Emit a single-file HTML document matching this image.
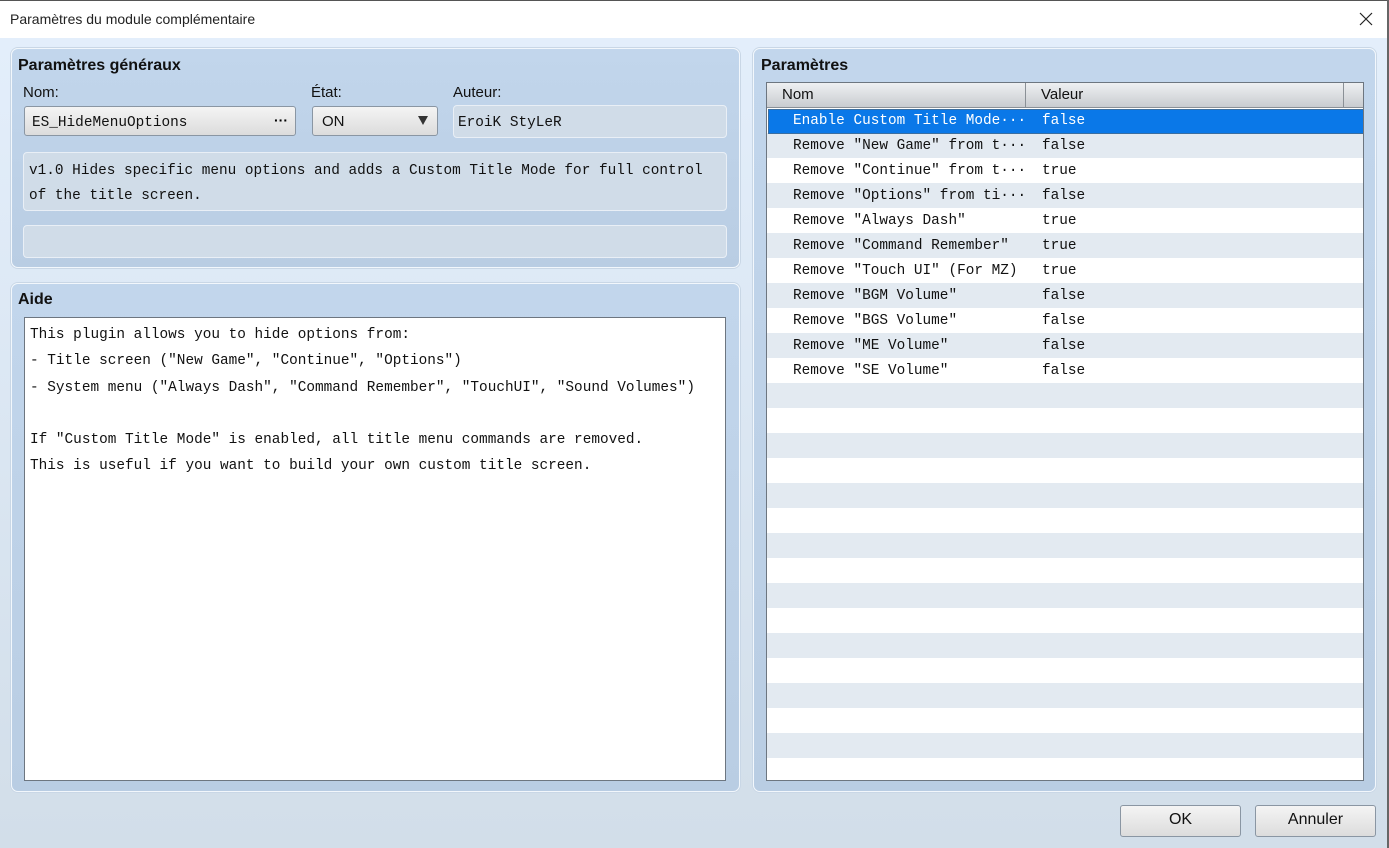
<!DOCTYPE html>
<html><head><meta charset="utf-8"><style>
*{box-sizing:border-box;margin:0;padding:0}
body{width:1389px;height:848px;overflow:hidden;position:relative;font-family:"Liberation Sans",sans-serif;background:linear-gradient(#e4effc,#d2dee9);}
.abs{position:absolute}
.title{left:0;top:0;width:1389px;height:38px;background:#fff;border-top:1px solid #555;}
.title span{position:absolute;left:10px;top:10px;font-size:14px;color:#222}
.rb{right:0;top:0;width:2px;height:848px;background:#666}
.panel{border:1px solid #f2f7fc;border-radius:7px;background:linear-gradient(#c2d6ec,#b9cde3);box-shadow:0 0 0 1px #c9d7e6}
.h{font-weight:bold;font-size:16px;color:#111}
.lbl{font-size:15px;color:#111}
.mono{font-family:"Liberation Mono",monospace;font-size:14.4px;color:#111}
.btn{border:1px solid #8a96a3;border-radius:3px;background:linear-gradient(#f4f4f4,#dcdcdc);}
.box{border:1px solid #e9eff6;border-radius:4px;background:#d0dce8}
.ta{background:#fff;border:1px solid #6d7680}
.row{position:absolute;left:1px;width:596px;height:25px}
.row span{position:absolute;top:4px}
</style></head><body>
<div class="abs title"><span>Paramètres du module complémentaire</span>
<svg class="abs" style="left:1359px;top:11px" width="14" height="14"><path d="M1 1L13 13M13 1L1 13" stroke="#222" stroke-width="1.2"/></svg></div>
<div class="abs rb"></div>

<div class="abs panel" style="left:11px;top:48px;width:729px;height:220px"></div>
<div class="abs h" style="left:18px;top:57px">Paramètres généraux</div>
<div class="abs lbl" style="left:23px;top:84px">Nom:</div>
<div class="abs lbl" style="left:311px;top:84px">État:</div>
<div class="abs lbl" style="left:453px;top:84px">Auteur:</div>
<div class="abs btn" style="left:24px;top:106px;width:272px;height:30px"></div>
<div class="abs mono" style="left:32px;top:115px">ES_HideMenuOptions</div>
<div class="abs" style="left:274px;top:112px;font-size:14px;font-weight:bold">···</div>
<div class="abs btn" style="left:312px;top:106px;width:126px;height:30px"></div>
<div class="abs lbl" style="left:322px;top:113px">ON</div>
<div class="abs" style="left:418px;top:116px;width:0;height:0;border-left:5px solid transparent;border-right:5px solid transparent;border-top:9px solid #333"></div>
<div class="abs box" style="left:453px;top:105px;width:274px;height:33px"></div>
<div class="abs mono" style="left:458px;top:115px">EroiK StyLeR</div>
<div class="abs box" style="left:23px;top:152px;width:704px;height:59px"></div>
<div class="abs mono" style="left:29px;top:159px;line-height:25px">v1.0 Hides specific menu options and adds a Custom Title Mode for full control<br>of the title screen.</div>
<div class="abs box" style="left:23px;top:225px;width:704px;height:33px"></div>

<div class="abs panel" style="left:11px;top:283px;width:729px;height:509px"></div>
<div class="abs h" style="left:18px;top:291px">Aide</div>
<div class="abs ta" style="left:24px;top:317px;width:702px;height:464px"></div>
<div class="abs mono" style="left:30px;top:322px;line-height:26.3px">This plugin allows you to hide options from:<br>- Title screen ("New Game", "Continue", "Options")<br>- System menu ("Always Dash", "Command Remember", "TouchUI", "Sound Volumes")<br><br>If "Custom Title Mode" is enabled, all title menu commands are removed.<br>This is useful if you want to build your own custom title screen.</div>

<div class="abs panel" style="left:753px;top:48px;width:623px;height:744px"></div>
<div class="abs h" style="left:761px;top:57px">Paramètres</div>
<div class="abs ta" style="left:766px;top:82px;width:598px;height:699px;overflow:hidden">
 <div class="abs" style="left:0;top:0;width:598px;height:25px;background:linear-gradient(#eef0f2,#c9ccd0);border-bottom:1px solid #8a9096"></div>
 <div class="abs" style="left:258px;top:0;width:1px;height:25px;background:#8a9096"></div>
 <div class="abs" style="left:576px;top:0;width:1px;height:25px;background:#8a9096"></div>
 <div class="abs lbl" style="left:15px;top:3px">Nom</div>
 <div class="abs lbl" style="left:274px;top:3px">Valeur</div>
 <div class="abs" style="left:0;top:25px;width:598px;height:674px;background:repeating-linear-gradient(#fff 0 25px,#e3eaf1 25px 50px)"></div>
 <div class="row mono" style="top:26px;background:#0a78e8;border:1px solid #3a6ea0;color:#fff"><span style="left:24px;top:3px">Enable Custom Title Mode···</span><span style="left:273px;top:3px">false</span></div>
 <div class="row mono" style="top:51px"><span style="left:25px">Remove "New Game" from t···</span><span style="left:274px">false</span></div>
 <div class="row mono" style="top:76px"><span style="left:25px">Remove "Continue" from t···</span><span style="left:274px">true</span></div>
 <div class="row mono" style="top:101px"><span style="left:25px">Remove "Options" from ti···</span><span style="left:274px">false</span></div>
 <div class="row mono" style="top:126px"><span style="left:25px">Remove "Always Dash"</span><span style="left:274px">true</span></div>
 <div class="row mono" style="top:151px"><span style="left:25px">Remove "Command Remember"</span><span style="left:274px">true</span></div>
 <div class="row mono" style="top:176px"><span style="left:25px">Remove "Touch UI" (For MZ)</span><span style="left:274px">true</span></div>
 <div class="row mono" style="top:201px"><span style="left:25px">Remove "BGM Volume"</span><span style="left:274px">false</span></div>
 <div class="row mono" style="top:226px"><span style="left:25px">Remove "BGS Volume"</span><span style="left:274px">false</span></div>
 <div class="row mono" style="top:251px"><span style="left:25px">Remove "ME Volume"</span><span style="left:274px">false</span></div>
 <div class="row mono" style="top:276px"><span style="left:25px">Remove "SE Volume"</span><span style="left:274px">false</span></div>
</div>

<div class="abs btn" style="left:1120px;top:805px;width:121px;height:32px"></div>
<div class="abs lbl" style="left:1120px;top:811px;width:121px;text-align:center;font-size:16px">OK</div>
<div class="abs btn" style="left:1255px;top:805px;width:121px;height:32px"></div>
<div class="abs lbl" style="left:1255px;top:811px;width:121px;text-align:center;font-size:16px">Annuler</div>
</body></html>
